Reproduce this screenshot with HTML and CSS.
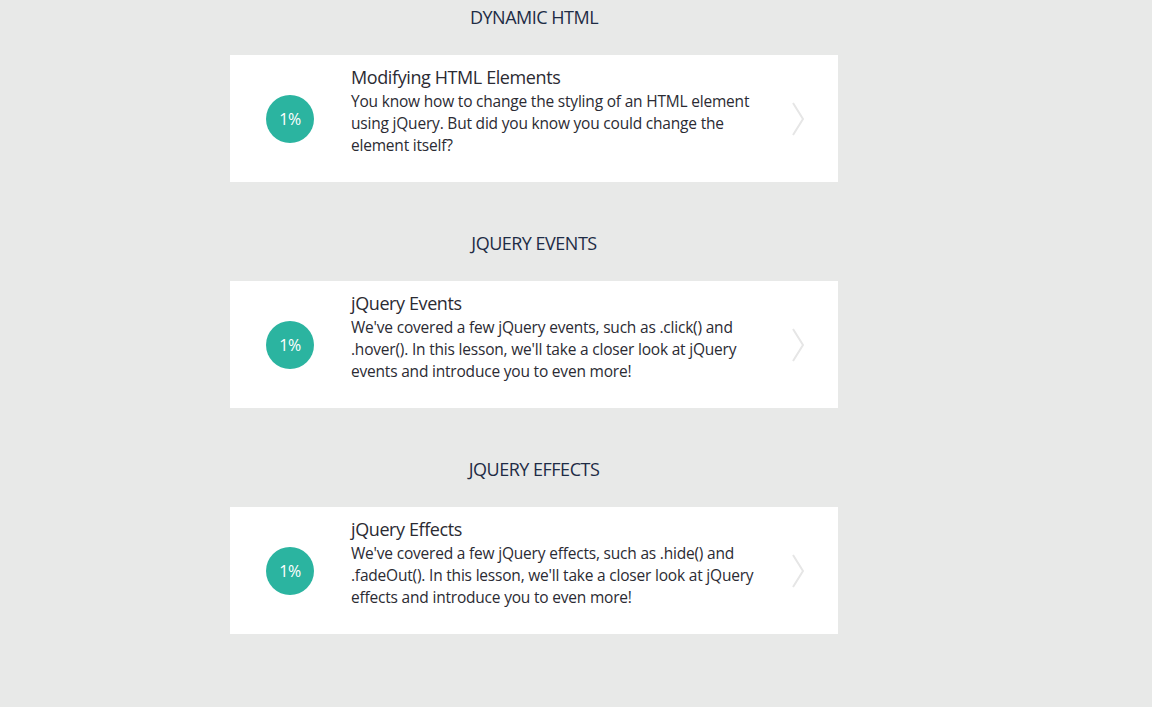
FILE: index.html
```html
<!DOCTYPE html>
<html>
<head>
<meta charset="utf-8">
<link rel="stylesheet" href="styles.css">
</head>
<body>
<main class="lessons">
  <section class="group">
    <h2 class="group-title">DYNAMIC HTML</h2>
    <a class="card" href="#">
      <div class="progress">1%</div>
      <div class="card-text">
        <h3 class="card-title">Modifying HTML Elements</h3>
        <p class="card-desc">You know how to change the styling of an HTML element using jQuery. But did you know you could change the element itself?</p>
      </div>
      <svg class="chevron" width="14" height="34" viewBox="0 0 14 34"><path d="M2 1 L12 17 L2 33" fill="none" stroke="#e6e6e6" stroke-width="2"/></svg>
    </a>
  </section>
  <section class="group">
    <h2 class="group-title">JQUERY EVENTS</h2>
    <a class="card" href="#">
      <div class="progress">1%</div>
      <div class="card-text">
        <h3 class="card-title">jQuery Events</h3>
        <p class="card-desc">We've covered a few jQuery events, such as .click() and .hover(). In this lesson, we'll take a closer look at jQuery events and introduce you to even more!</p>
      </div>
      <svg class="chevron" width="14" height="34" viewBox="0 0 14 34"><path d="M2 1 L12 17 L2 33" fill="none" stroke="#e6e6e6" stroke-width="2"/></svg>
    </a>
  </section>
  <section class="group">
    <h2 class="group-title">JQUERY EFFECTS</h2>
    <a class="card" href="#">
      <div class="progress">1%</div>
      <div class="card-text">
        <h3 class="card-title">jQuery Effects</h3>
        <p class="card-desc">We've covered a few jQuery effects, such as .hide() and .fadeOut(). In this lesson, we'll take a closer look at jQuery effects and introduce you to even more!</p>
      </div>
      <svg class="chevron" width="14" height="34" viewBox="0 0 14 34"><path d="M2 1 L12 17 L2 33" fill="none" stroke="#e6e6e6" stroke-width="2"/></svg>
    </a>
  </section>
</main>
</body>
</html>
```

FILE: styles.css
```css
html, body {
  margin: 0;
  padding: 0;
  background: #e8e9e8;
}
body {
  font-family: "Open Sans", "Noto Sans", sans-serif;
  color: #2b2b33;
  height: 707px;
  overflow: hidden;
}
.lessons {
  width: 608px;
  margin-left: 230px;
  padding-top: 5px;
}
.group {
  margin-bottom: 49px;
}
.group-title {
  margin: 0;
  height: 50px;
  line-height: 24px;
  font-size: 18px;
  font-weight: 400;
  text-align: center;
  color: #1e2c45;
  letter-spacing: -0.5px;
}
.card {
  display: flex;
  align-items: center;
  height: 127px;
  box-sizing: border-box;
  background: #fff;
  text-decoration: none;
  color: inherit;
  padding-left: 36px;
  padding-right: 33px;
}
.progress {
  flex: 0 0 48px;
  height: 48px;
  border-radius: 50%;
  background: #2bb4a0;
  color: #fff;
  font-size: 16px;
  line-height: 48px;
  text-align: center;
  letter-spacing: -0.5px;
}
.card-text {
  flex: 1;
  margin-left: 37px;
  margin-right: 20px;
  margin-top: -16px;
}
.card-title {
  margin: 0 0 1px;
  font-size: 18px;
  font-weight: 400;
  line-height: 24px;
  letter-spacing: -0.4px;
}
.card-desc {
  margin: 0;
  font-size: 15.5px;
  line-height: 22px;
  letter-spacing: -0.2px;
}
.chevron {
  flex: 0 0 14px;
}
```
